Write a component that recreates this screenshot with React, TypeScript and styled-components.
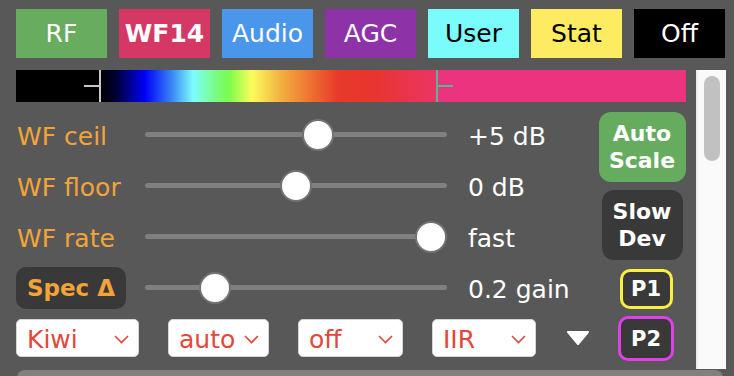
import styled, { createGlobalStyle } from 'styled-components';

const GlobalStyle = createGlobalStyle`
    html, body {
        margin: 0;
        padding: 0;
        background: #585858;
    }
    body {
        font-family: "DejaVu Sans", Verdana, sans-serif;
    }
`;

const ORANGE = '#f2a43a';
const RED = '#e2483a';
const DARK = '#393939';

const Page = styled.div`
    width: 734px;
    height: 376px;
    overflow: hidden;
    box-sizing: border-box;
    padding-top: 9px;
    background: #585858;
`;

const TabBar = styled.div`
    display: flex;
    gap: 12px;
    padding-left: 16px;
`;

const Tab = styled.div<{ $bg: string; $fg: string; $bold?: boolean }>`
    width: 91px;
    height: 49px;
    display: flex;
    align-items: center;
    justify-content: center;
    background: ${p => p.$bg};
    color: ${p => p.$fg};
    font-size: 25px;
    font-weight: ${p => (p.$bold ? 700 : 400)};
`;

const Body = styled.div`
    display: flex;
    margin-top: 12px;
    height: 299px;
    padding-left: 16px;
`;

const Main = styled.div`
    width: 670px;
    display: flex;
    flex-direction: column;
`;

const ColorBar = styled.div`
    position: relative;
    height: 32px;
    background: linear-gradient(to right,
        #000 0px, #000 84px, #000030 99px, #0000f8 129px, #3b8df5 157px,
        #7dfdfd 177px, #7afc80 200px, #7cfc4c 213px, #fcfc5c 236px,
        #f2b040 265px, #ee7030 295px, #e8392a 322px, #e83530 360px,
        #ea3558 405px, #ea3568 420px, #ec3380 421px, #ec3380 100%);
`;

const Marker = styled.div<{ $left: number; $color: string; $side: 'left' | 'right' }>`
    position: absolute;
    top: 0;
    bottom: 0;
    left: ${p => p.$left}px;
    width: 2px;
    background: ${p => p.$color};
    &::before {
        content: '';
        position: absolute;
        top: 15px;
        height: 2px;
        width: 15px;
        background: ${p => p.$color};
        ${p => (p.$side === 'left' ? 'right: 2px;' : 'left: 2px;')}
    }
`;

const Panel = styled.div`
    display: flex;
`;

const Controls = styled.div`
    width: 582px;
    margin-top: 7px;
    display: flex;
    flex-direction: column;
`;

const SliderRow = styled.div`
    display: grid;
    grid-template-columns: 129px 302px auto;
    align-items: center;
    height: 51px;
`;

const Label = styled.div`
    color: ${ORANGE};
    font-size: 25px;
    padding: 4px 0 0 1px;
    white-space: nowrap;
`;

const SpecButton = styled.div`
    width: 110px;
    height: 42px;
    border-radius: 10px;
    background: ${DARK};
    color: ${ORANGE};
    font-size: 23px;
    font-weight: 700;
    display: flex;
    align-items: center;
    justify-content: center;
`;

const Track = styled.div`
    position: relative;
    height: 5px;
    border-radius: 3px;
    background: #808080;
`;

const Thumb = styled.div`
    position: absolute;
    top: 50%;
    width: 32px;
    height: 32px;
    box-sizing: border-box;
    border-radius: 50%;
    background: #fff;
    border: 2px solid #737373;
    transform: translate(-50%, -50%);
`;

const Value = styled.div`
    padding: 4px 0 0 21px;
    color: #fff;
    font-size: 25px;
    white-space: nowrap;
`;

const DropRow = styled.div`
    display: flex;
    align-items: center;
    gap: 29px;
    margin-top: 6px;
`;

const Select = styled.div<{ $w: number }>`
    width: ${p => p.$w}px;
    height: 38px;
    box-sizing: border-box;
    padding: 2px 9px 0 10px;
    display: flex;
    align-items: center;
    justify-content: space-between;
    background: #fff;
    border: 1px solid #d6d6d6;
    border-radius: 5px;
    color: ${RED};
    font-size: 25px;
`;

const Menu = styled.div`
    margin-left: 1px;
    display: flex;
    align-items: center;
`;

const RightCol = styled.div`
    width: 88px;
    padding-top: 10px;
    display: flex;
    flex-direction: column;
    align-items: center;
`;

const BigButton = styled.div<{ $bg: string; $w: number; $mt: number }>`
    width: ${p => p.$w}px;
    height: 70px;
    margin-top: ${p => p.$mt}px;
    border-radius: 12px;
    background: ${p => p.$bg};
    color: #fff;
    font-size: 22px;
    font-weight: 700;
    line-height: 27px;
    text-align: center;
    display: flex;
    flex-direction: column;
    justify-content: center;
`;

const PresetButton = styled.div<{ $border: string; $w: number; $h: number; $mt: number }>`
    width: ${p => p.$w}px;
    height: ${p => p.$h}px;
    margin-top: ${p => p.$mt}px;
    margin-left: 8px;
    box-sizing: border-box;
    border: 3px solid ${p => p.$border};
    border-radius: 10px;
    background: ${DARK};
    color: #fff;
    font-size: 21px;
    font-weight: 700;
    display: flex;
    align-items: center;
    justify-content: center;
`;

const Scrollbar = styled.div`
    margin-left: 10px;
    width: 30px;
    box-sizing: border-box;
    background: #fafafa;
    border-left: 2px solid #ececec;
    padding: 6px 0 0 6px;
`;

const ScrollThumb = styled.div`
    width: 16px;
    height: 85px;
    border-radius: 8px;
    background: #c1c1c1;
`;

const BottomStrip = styled.div`
    margin: 1px 11px 0 17px;
    height: 20px;
    border-radius: 8px 8px 0 0;
    background: #808080;
`;

const tabs = [
    { name: 'RF', bg: '#68ac5f', fg: '#fff' },
    { name: 'WF14', bg: '#d63865', fg: '#fff', bold: true },
    { name: 'Audio', bg: '#4a96ea', fg: '#fff' },
    { name: 'AGC', bg: '#8e32a8', fg: '#fff' },
    { name: 'User', bg: '#7bfcfc', fg: '#000' },
    { name: 'Stat', bg: '#fdec62', fg: '#000' },
    { name: 'Off', bg: '#000', fg: '#fff' },
];

const sliders = [
    { label: 'WF ceil', value: 0.58, text: '+5 dB' },
    { label: 'WF floor', value: 0.5, text: '0 dB' },
    { label: 'WF rate', value: 1, text: 'fast' },
    { label: 'Spec Δ', value: 0.2, text: '0.2 gain', button: true },
];

const selects = [
    { text: 'Kiwi', w: 123 },
    { text: 'auto', w: 101 },
    { text: 'off', w: 105 },
    { text: 'IIR', w: 104 },
];

const Chevron = () => (
    <svg width="15" height="9" viewBox="0 0 15 9">
        <polyline points="1,1 7.5,7.5 14,1" fill="none" stroke={RED} strokeWidth="1.6" />
    </svg>
);

const Slider = ({ value }: { value: number }) => (
    <Track>
        <Thumb style={{ left: `calc(16px + (100% - 32px) * ${value})` }} />
    </Track>
);

export default function App() {
    return (
        <>
            <GlobalStyle />
            <Page>
                <TabBar>
                    {tabs.map(t => (
                        <Tab key={t.name} $bg={t.bg} $fg={t.fg} $bold={t.bold}>{t.name}</Tab>
                    ))}
                </TabBar>
                <Body>
                    <Main>
                        <ColorBar>
                            <Marker $left={83} $color="#c8c8c8" $side="left" />
                            <Marker $left={420} $color="#56b88e" $side="right" />
                        </ColorBar>
                        <Panel>
                            <Controls>
                                {sliders.map(s => (
                                    <SliderRow key={s.label}>
                                        {s.button ? <SpecButton>{s.label}</SpecButton> : <Label>{s.label}</Label>}
                                        <Slider value={s.value} />
                                        <Value>{s.text}</Value>
                                    </SliderRow>
                                ))}
                                <DropRow>
                                    {selects.map(s => (
                                        <Select key={s.text} $w={s.w}>
                                            <span>{s.text}</span>
                                            <Chevron />
                                        </Select>
                                    ))}
                                    <Menu>
                                        <svg width="24" height="14" viewBox="0 0 24 14">
                                            <path d="M2 1 H22 L12 13 Z" fill="#fff" stroke="#fff" strokeWidth="2" strokeLinejoin="round" />
                                        </svg>
                                    </Menu>
                                </DropRow>
                            </Controls>
                            <RightCol>
                                <BigButton $bg="#66ac5e" $w={87} $mt={0}><span>Auto</span><span>Scale</span></BigButton>
                                <BigButton $bg={DARK} $w={81} $mt={8}><span>Slow</span><span>Dev</span></BigButton>
                                <PresetButton $border="#f8f040" $w={53} $h={40} $mt={9}>P1</PresetButton>
                                <PresetButton $border="#e040e8" $w={56} $h={45} $mt={7}>P2</PresetButton>
                            </RightCol>
                        </Panel>
                    </Main>
                    <Scrollbar>
                        <ScrollThumb />
                    </Scrollbar>
                </Body>
                <BottomStrip />
            </Page>
        </>
    );
}
